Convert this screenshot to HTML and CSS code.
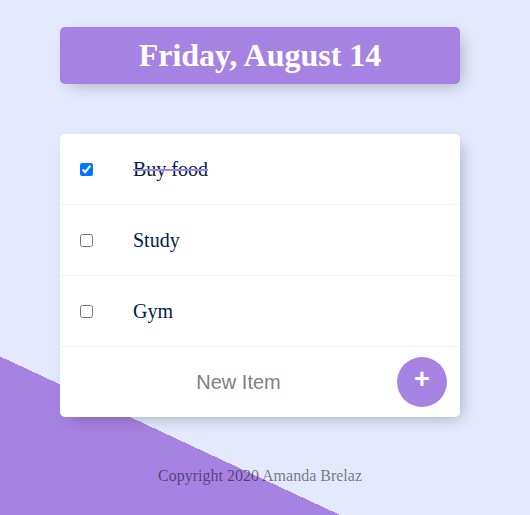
FILE: index.html
```html
<!DOCTYPE html>
<html>
<head>
<meta charset="utf-8">
<title>To Do List</title>
<link rel="stylesheet" href="styles.css">
</head>
<body>
  <div class="page">
    <div class="box heading">
      <h1 class="title">Friday, August 14</h1>
    </div>
    <div class="box list">
      <div class="item">
        <input class="check" type="checkbox" checked>
        <p class="label">Buy food</p>
      </div>
      <div class="item">
        <input class="check" type="checkbox">
        <p class="label">Study</p>
      </div>
      <div class="item">
        <input class="check" type="checkbox">
        <p class="label">Gym</p>
      </div>
      <form class="item new-form" onsubmit="return false;">
        <input class="new-input" type="text" name="newItem" placeholder="New Item" autocomplete="off">
        <button class="add-btn" type="submit" name="list">+</button>
      </form>
    </div>
    <footer class="footer">Copyright 2020 Amanda Brelaz</footer>
  </div>
</body>
</html>
```

FILE: styles.css
```css
html {
  background-color: #E4E9FD;
  background-image: linear-gradient(25deg, #A683E3 50%, #E4E9FD 50%);
  background-repeat: no-repeat;
  background-size: 100% 960px;
  font-family: "Liberation Serif", serif;
}

body {
  margin: 0;
}

.page {
  padding-top: 27px;
  padding-right: 10px;
}

.box {
  width: 400px;
  margin: 0 auto 50px;
  background: #fff;
  border-radius: 5px;
  box-shadow: 5px 5px 15px -5px rgba(0, 0, 0, 0.3);
}

.heading {
  background-color: #A683E3;
  text-align: center;
}

.title {
  margin: 0;
  padding: 10px;
  color: #fff;
  font-size: 32px;
  font-weight: bold;
  font-family: "Liberation Serif", serif;
}

.item {
  min-height: 70px;
  display: flex;
  align-items: center;
  border-bottom: 1px solid #F1F1F1;
}

.item:last-child {
  border-bottom: 0;
}

.check {
  margin: 20px;
  width: 13px;
  height: 13px;
}

.label {
  margin: 0;
  padding: 20px;
  font-size: 20px;
  font-weight: 200;
  color: #00204a;
  font-family: "Liberation Serif", serif;
}

.check:checked + .label {
  text-decoration: line-through;
  text-decoration-color: #A683E3;
}

.new-form {
  margin-left: 20px;
  text-align: center;
}

.new-input {
  text-align: center;
  height: 60px;
  border: none;
  background: transparent;
  font-size: 20px;
  font-weight: 200;
  font-family: "Liberation Sans", Arial, sans-serif;
  width: 313px;
  padding: 1px 2px;
  margin: 0;
}

.new-input:focus {
  outline: none;
}

.new-input::placeholder {
  color: grey;
  opacity: 1;
}

.add-btn {
  min-height: 50px;
  width: 50px;
  border-radius: 50%;
  border: 0;
  background-color: #A683E3;
  color: #fff;
  font-size: 27px;
  font-weight: bold;
  font-family: "Liberation Sans", Arial, sans-serif;
  padding: 0 0 6px;
  margin: 0;
  line-height: 1;
}

.footer {
  color: rgba(0, 0, 0, 0.5);
  text-align: center;
  font-size: 16px;
  font-family: "Liberation Serif", serif;
}
```
